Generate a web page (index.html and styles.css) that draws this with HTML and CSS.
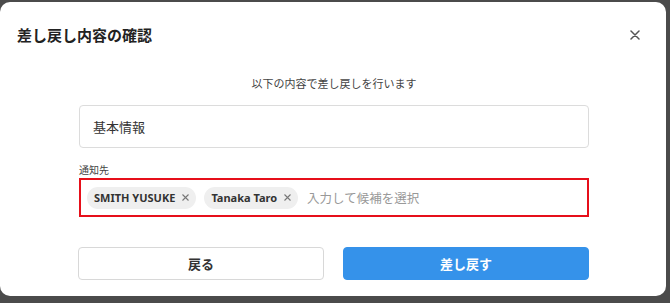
FILE: index.html
```html
<!DOCTYPE html>
<html lang="ja">
<head>
  <meta charset="UTF-8" />
  <meta name="viewport" content="width=device-width, initial-scale=1" />
  <title>差し戻し内容の確認</title>
  <link rel="stylesheet" href="styles.css">
</head>
<body>

  <div class="modal">
    <div class="modal-header">
      <h1>差し戻し内容の確認</h1>
      <button class="close" aria-label="閉じる">
        <svg width="10" height="10" viewBox="0 0 10 10">
          <path d="M1 1L9 9M9 1L1 9" stroke="#555" stroke-width="1.5" stroke-linecap="round" />
        </svg>
      </button>
    </div>

    <div class="modal-body">
      <p class="lead">以下の内容で差し戻しを行います</p>

      <div class="box">基本情報</div>

      <label class="field-label">通知先</label>
      <div class="tag-input">
        <span class="chip">SMITH YUSUKE
          <svg class="chip-x" width="7" height="7" viewBox="0 0 7 7">
            <path d="M0.5 0.5L6.5 6.5M6.5 0.5L0.5 6.5" stroke="#777" stroke-width="1.1" />
          </svg>
        </span>
        <span class="chip">Tanaka Taro
          <svg class="chip-x" width="7" height="7" viewBox="0 0 7 7">
            <path d="M0.5 0.5L6.5 6.5M6.5 0.5L0.5 6.5" stroke="#777" stroke-width="1.1" />
          </svg>
        </span>
        <span class="placeholder">入力して候補を選択</span>
      </div>

      <div class="actions">
        <button class="btn btn-back">戻る</button>
        <button class="btn btn-primary">差し戻す</button>
      </div>
    </div>
  </div>

</body>
</html>
```

FILE: styles.css
```css
body {
  margin: 0;
  background-color: #4b4b4b;
  font-family: "Noto Sans CJK JP", "Noto Sans", sans-serif;
  color: #333;
  height: 303px;
  overflow: hidden;
}
.modal {
  width: 666px;
  height: 294px;
  margin-top: 2px;
  background-color: #fff;
  border-radius: 10px;
}
.modal-header {
  display: flex;
  justify-content: space-between;
  align-items: center;
  padding: 22px 26px 0 17px;
}
.modal-header h1 {
  margin: 0;
  font-size: 15px;
  line-height: 22px;
  font-weight: 700;
  color: #222;
}
.close {
  border: none;
  background: none;
  padding: 0;
  width: 10px;
  height: 10px;
  display: flex;
  cursor: pointer;
}
.modal-body {
  padding: 0 77px 0 79px;
}
.lead {
  margin: 29px 0 0;
  text-align: center;
  font-size: 11px;
  line-height: 16px;
  color: #444;
}
.box {
  margin-top: 14px;
  height: 41px;
  border: 1px solid #dcdcdc;
  border-radius: 4px;
  padding: 0 13px;
  display: flex;
  align-items: center;
  font-size: 13px;
  color: #333;
}
.field-label {
  display: block;
  margin-top: 15px;
  font-size: 10px;
  line-height: 14px;
  color: #444;
}
.tag-input {
  margin-top: 1px;
  height: 35px;
  border: 2px solid #e60f1a;
  display: flex;
  align-items: center;
  gap: 8px;
  padding: 0 6px;
}
.chip {
  display: inline-flex;
  align-items: center;
  gap: 7px;
  height: 22px;
  padding: 0 7px 0 7px;
  background-color: #efefef;
  border-radius: 11px;
  font-family: "Noto Sans", sans-serif;
  font-size: 11px;
  font-weight: 700;
  color: #333;
}
.chip-x {
  display: block;
}
.placeholder {
  margin-left: 1px;
  font-size: 12.5px;
  color: #999;
}
.actions {
  display: flex;
  gap: 19px;
  margin-top: 30px;
  margin-left: -1px;
}
.btn {
  flex: 1;
  height: 33px;
  border-radius: 4px;
  font-family: "Noto Sans CJK JP", sans-serif;
  font-size: 13px;
  font-weight: 700;
  cursor: pointer;
}
.btn-back {
  background-color: #fff;
  border: 1px solid #d8d8d8;
  color: #333;
}
.btn-primary {
  background-color: #3592ea;
  border: 1px solid #3592ea;
  color: #fff;
}
```
